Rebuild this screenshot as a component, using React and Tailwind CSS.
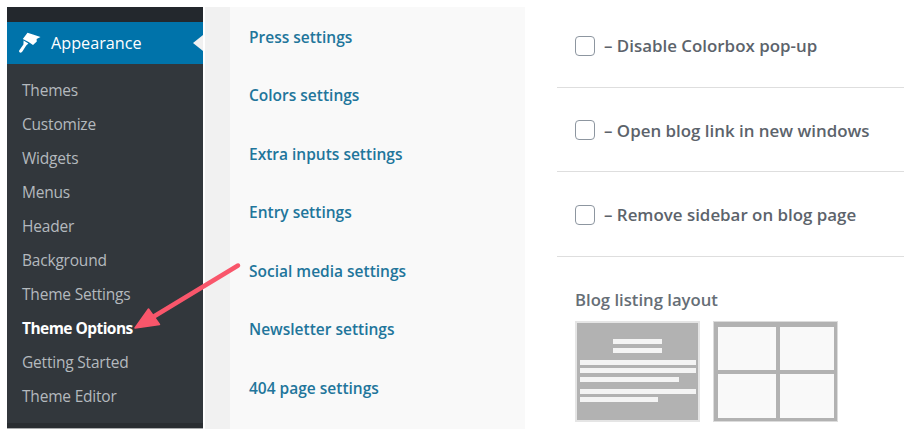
import React from 'react';

const menuItems = ['Themes', 'Customize', 'Widgets', 'Menus', 'Header', 'Background', 'Theme Settings', 'Theme Options', 'Getting Started', 'Theme Editor'];
const sections = ['Press settings', 'Colors settings', 'Extra inputs settings', 'Entry settings', 'Social media settings', 'Newsletter settings', '404 page settings'];
const options = ['Disable Colorbox pop-up', 'Open blog link in new windows', 'Remove sidebar on blog page'];

function Sidebar() {
  return (
    <aside className="w-[196px] h-[422px] shrink-0 flex flex-col bg-[#32373c] border-b border-[#a9abad] font-['Open_Sans',sans-serif]">
      <div className="h-[15px] bg-[#23282d]"></div>
      <div className="relative h-[42px] bg-[#0073aa] flex items-center pl-[11px] gap-[9px] text-white text-[16.2px]">
        {/* brush icon */}
        <svg width="24" height="22" viewBox="0 0 24 22" fill="white">
          <path d="M9.5 0.8 L15 2.4 L22.5 5 L18.6 7 L18.8 9.6 L15 13 L10.6 10 L4.8 7 Z" />
          <path d="M5.6 8.6 L10.4 11.4 L8.2 13.4 L4.4 19.6 C3.2 21.6 0.4 20.4 1.2 18.4 L5.4 12.4 Z" />
        </svg>
        <span>Appearance</span>
        <div className="absolute right-0 top-[13px] w-0 h-0 border-y-[8px] border-y-transparent border-r-[10px] border-r-[#f1f1f1]"></div>
      </div>
      <ul className="pt-[10px] flex-1">
        {menuItems.map((item) => (
          <li
            key={item}
            className={`h-[34px] pl-[15px] flex items-center text-[15.5px] ${item === 'Theme Options' ? 'text-white font-bold tracking-[-0.55px]' : 'text-[#b4b9be] tracking-[-0.2px]'}`}
          >
            {item}
          </li>
        ))}
      </ul>
      <div className="h-[5px] bg-[#292d31]"></div>
    </aside>
  );
}

function SectionList() {
  return (
    <div className="flex shrink-0 h-[422px] ml-[2px]">
      <div className="w-[25px] bg-[#f1f1f1]"></div>
      <nav className="w-[295px] bg-[#f9f9f9] pl-[19px] pt-[1px] font-['Open_Sans',sans-serif]">
        {sections.map((s) => (
          <div key={s} className="h-[58.5px] flex items-center text-[15.5px] font-semibold text-[#21759b]">{s}</div>
        ))}
      </nav>
    </div>
  );
}

function OptionRow({ label }) {
  return (
    <div className="h-[84.5px] pt-[2px] flex items-center pl-[18px] gap-[9px] border-b border-[#dedede] text-[#5c636b] text-[16.9px] font-semibold font-['Open_Sans',sans-serif]">
      <span className="w-[20px] h-[20px] rounded-[4px] border border-[#8d96a0] bg-white shrink-0"></span>
      <span>– {label}</span>
    </div>
  );
}

function ListLayoutThumb() {
  return (
    <div className="w-[125px] h-[101px] bg-[#b2b2b2] border-2 border-[#e5e5e5] flex flex-col pt-[16px] pl-[3px] pr-[3px]">
      <div className="flex flex-col items-center gap-[4px]">
        <div className="w-[49px] h-[5px] bg-[#f4f4f4]"></div>
        <div className="w-[49px] h-[5px] bg-[#f4f4f4]"></div>
      </div>
      <div className="mt-[7px] flex flex-col gap-[3.5px]">
        <div className="w-[116px] h-[5px] bg-[#f4f4f4]"></div>
        <div className="w-[116px] h-[5px] bg-[#f4f4f4]"></div>
        <div className="w-[99px] h-[5px] bg-[#f4f4f4]"></div>
      </div>
      <div className="mt-[7px] flex flex-col gap-[3.5px]">
        <div className="w-[116px] h-[5px] bg-[#f4f4f4]"></div>
        <div className="w-[78px] h-[5px] bg-[#f4f4f4]"></div>
      </div>
    </div>
  );
}

function GridLayoutThumb() {
  return (
    <div className="w-[125px] h-[101px] bg-[#b2b2b2] border border-[#dcdcdc] grid grid-cols-[58px_54px] grid-rows-[43px_44px] gap-[4px] pt-[5px] pl-[4px]">
      <div className="bg-[#f9f9f9]"></div>
      <div className="bg-[#f9f9f9]"></div>
      <div className="bg-[#f9f9f9]"></div>
      <div className="bg-[#f9f9f9]"></div>
    </div>
  );
}

function OptionsPanel() {
  return (
    <div className="w-[347px] ml-[32px] -mt-[4px]">
      {options.map((o) => <OptionRow key={o} label={o} />)}
      <div className="pl-[18px] pt-[32px]">
        <div className="text-[16.7px] leading-[22px] font-semibold text-[#666e76] font-['Open_Sans',sans-serif]">Blog listing layout</div>
        <div className="mt-[10px] flex gap-[13px]">
          <ListLayoutThumb />
          <GridLayoutThumb />
        </div>
      </div>
    </div>
  );
}

export default function App() {
  return (
    <div className="relative w-[909px] h-[435px] bg-white overflow-hidden pt-[7px] pl-[7px] flex items-start">
      <Sidebar />
      <SectionList />
      <OptionsPanel />
      {/* pink annotation arrow */}
      <svg className="absolute left-[125px] top-[255px]" width="125" height="80" viewBox="0 0 125 80" fill="none">
        <path d="M113 10.5 L28 62" stroke="#f9566b" strokeWidth="4.5" strokeLinecap="round" />
        <path d="M10 73 L23.5 54 L34.5 69.5 Z" fill="#f9566b" stroke="#f9566b" strokeWidth="1.5" strokeLinejoin="round" />
      </svg>
    </div>
  );
}
